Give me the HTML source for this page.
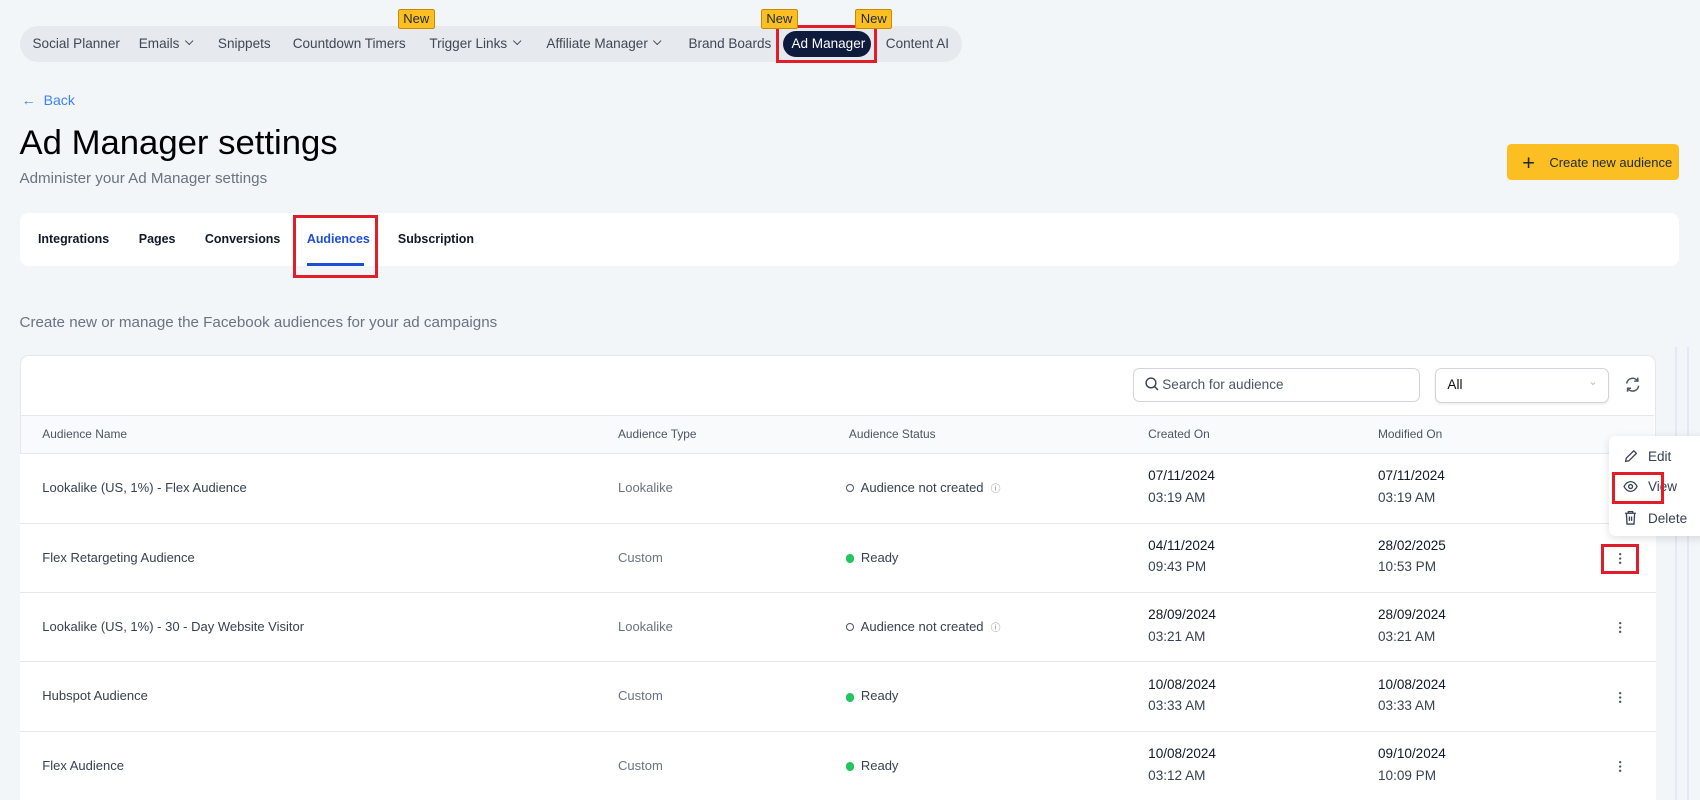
<!DOCTYPE html>
<html><head><meta charset="utf-8"><style>
html,body{margin:0;padding:0;width:1700px;height:800px;overflow:hidden;background:#f2f6f9;}
#w{zoom:1.0842;position:relative;width:1568px;height:738px;font-family:"Liberation Sans",sans-serif;color:#1f2937;}
.a{position:absolute;white-space:nowrap;}
.nav{left:18px;top:24px;width:869px;height:33px;background:#e6eaee;border-radius:17px;}
.ni{top:33px;font-size:12.5px;color:#3f4654;}
.new{background:#fbbf24;border:1px solid #c98a00;font-size:12px;color:#1f2937;padding:1px 4px;top:8px;height:15px;line-height:15px;border-radius:2px;}
.red{border:3px solid #e11d2a;box-sizing:border-box;}
.card{background:#fff;border-radius:8px;}
.tab{top:214px;font-size:11.5px;font-weight:bold;color:#111827;}
.th{top:394px;font-size:11px;color:#4b5563;}
.row{left:18px;width:1509px;height:64px;border-top:1px solid #e5e7eb;background:#fff;}
.c{font-size:12px;color:#374151;}
.d{font-size:12.5px;color:#111827;}
.t{font-size:12.5px;color:#374151;}
.dot{display:inline-block;width:8px;height:8px;border-radius:50%;background:#22c55e;margin-right:6px;vertical-align:-1px;}
.ring{display:inline-block;width:6px;height:6px;border-radius:50%;border:1.5px solid #4b5563;margin-right:6px;vertical-align:0px;}
.chev{display:inline-block;width:5px;height:5px;border-right:1.5px solid #3f4654;border-bottom:1.5px solid #3f4654;transform:rotate(45deg);margin-left:6px;vertical-align:3px;}
</style></head><body><div id="w">
<div class="a nav"></div>
<div class="a ni" style="left:30px">Social Planner</div>
<div class="a ni" style="left:128px">Emails<span class="chev"></span></div>
<div class="a ni" style="left:201px">Snippets</div>
<div class="a ni" style="left:270px">Countdown Timers</div>
<div class="a ni" style="left:396px">Trigger Links<span class="chev"></span></div>
<div class="a ni" style="left:504px">Affiliate Manager<span class="chev"></span></div>
<div class="a ni" style="left:635px">Brand Boards</div>
<div class="a" style="left:722px;top:29px;width:81px;height:24px;background:#0f1b3d;border-radius:12px;"></div>
<div class="a ni" style="left:730px;color:#fff">Ad Manager</div>
<div class="a red" style="left:716px;top:23px;width:93px;height:35px"></div>
<div class="a ni" style="left:817px">Content AI</div>
<div class="a new" style="left:367px">New</div>
<div class="a new" style="left:702px">New</div>
<div class="a new" style="left:789px">New</div>

<div class="a" style="left:20px;top:85px;font-size:13px;color:#3b82f6">←&nbsp; Back</div>
<div class="a" style="left:18px;top:114px;font-size:32px;color:#000">Ad Manager settings</div>
<div class="a" style="left:18px;top:157px;font-size:14px;color:#6b7280">Administer your Ad Manager settings</div>
<div class="a" style="left:1390px;top:133px;width:159px;height:33px;background:#fbbf24;border-radius:4px;"></div>
<div class="a" style="left:1404px;top:138px;font-size:20px;color:#222">+</div>
<div class="a" style="left:1429px;top:143px;font-size:12px;color:#1f2937">Create new audience</div>

<div class="a card" style="left:18px;top:196px;width:1531px;height:49px"></div>
<div class="a tab" style="left:35px">Integrations</div>
<div class="a tab" style="left:128px">Pages</div>
<div class="a tab" style="left:189px">Conversions</div>
<div class="a tab" style="left:283px;color:#1d4ed8">Audiences</div>
<div class="a" style="left:283px;top:243px;width:53px;height:2px;background:#1d4ed8"></div>
<div class="a tab" style="left:367px">Subscription</div>
<div class="a red" style="left:270px;top:198px;width:79px;height:58px"></div>

<div class="a" style="left:18px;top:290px;font-size:14px;color:#6b7280">Create new or manage the Facebook audiences for your ad campaigns</div>

<div class="a" style="left:1545px;top:320px;width:2px;height:418px;background:#e6e8f6"></div>
<div class="a" style="left:1556px;top:320px;width:2px;height:418px;background:#e6e8f6"></div>

<div class="a card" style="left:18px;top:327px;width:1509px;height:420px;border:1px solid #e5e7eb;box-sizing:border-box"></div>
<div class="a" style="left:1045px;top:339px;width:265px;height:32px;border:1px solid #d1d5db;border-radius:6px;box-sizing:border-box;background:#fff"></div>
<svg class="a" style="left:1056px;top:348px" width="13" height="13" viewBox="0 0 13 13"><circle cx="5.5" cy="5.5" r="4.5" fill="none" stroke="#374151" stroke-width="1.3"/><path d="M9 9l3 3" stroke="#374151" stroke-width="1.3"/></svg>
<div class="a" style="left:1072px;top:348px;font-size:12.5px;color:#4b5563">Search for audience</div>
<div class="a" style="left:1324px;top:339px;width:160px;height:33px;border:1px solid #d1d5db;border-radius:6px;box-sizing:border-box;background:#fff;box-shadow:0 1px 2px rgba(0,0,0,.08)"></div>
<div class="a" style="left:1335px;top:348px;font-size:12.5px;color:#111">All</div>
<div class="a" style="left:1465px;top:346px;font-size:10px;color:#bbb">⌄</div>
<svg class="a" style="left:1498px;top:347px" width="16" height="16" viewBox="0 0 16 16" fill="none" stroke="#4b5563" stroke-width="1.4"><path d="M2.5 7a5.5 5.5 0 0 1 10-2.5M13.5 9a5.5 5.5 0 0 1-10 2.5"/><path d="M12.7 1.5v3.2H9.5M3.3 14.5v-3.2h3.2"/></svg>

<div class="a" style="left:19px;top:383px;width:1507px;height:35px;background:#f8fafc;border-top:1px solid #e5e7eb"></div>
<div class="a th" style="left:39px">Audience Name</div>
<div class="a th" style="left:570px">Audience Type</div>
<div class="a th" style="left:783px">Audience Status</div>
<div class="a th" style="left:1059px">Created On</div>
<div class="a th" style="left:1271px">Modified On</div>

<div class="a row" style="top:418px"></div>
<div class="a row" style="top:482px"></div>
<div class="a row" style="top:546px"></div>
<div class="a row" style="top:610px"></div>
<div class="a row" style="top:674px"></div>

<div class="a c" style="left:39px;top:443px">Lookalike (US, 1%) - Flex Audience</div>
<div class="a c" style="left:570px;top:443px;color:#6b7280">Lookalike</div>
<div class="a c" style="left:780px;top:443px"><span class="ring"></span>Audience not created &nbsp;<span style="font-size:9px;color:#888">ⓘ</span></div>
<div class="a d" style="left:1059px;top:432px">07/11/2024</div><div class="a t" style="left:1059px;top:452px">03:19 AM</div>
<div class="a d" style="left:1271px;top:432px">07/11/2024</div><div class="a t" style="left:1271px;top:452px">03:19 AM</div>

<div class="a c" style="left:39px;top:507px">Flex Retargeting Audience</div>
<div class="a c" style="left:570px;top:507px;color:#6b7280">Custom</div>
<div class="a c" style="left:780px;top:507px"><span class="dot"></span>Ready</div>
<div class="a d" style="left:1059px;top:496px">04/11/2024</div><div class="a t" style="left:1059px;top:516px">09:43 PM</div>
<div class="a d" style="left:1271px;top:496px">28/02/2025</div><div class="a t" style="left:1271px;top:516px">10:53 PM</div>

<div class="a c" style="left:39px;top:571px">Lookalike (US, 1%) - 30 - Day Website Visitor</div>
<div class="a c" style="left:570px;top:571px;color:#6b7280">Lookalike</div>
<div class="a c" style="left:780px;top:571px"><span class="ring"></span>Audience not created &nbsp;<span style="font-size:9px;color:#888">ⓘ</span></div>
<div class="a d" style="left:1059px;top:560px">28/09/2024</div><div class="a t" style="left:1059px;top:580px">03:21 AM</div>
<div class="a d" style="left:1271px;top:560px">28/09/2024</div><div class="a t" style="left:1271px;top:580px">03:21 AM</div>

<div class="a c" style="left:39px;top:635px">Hubspot Audience</div>
<div class="a c" style="left:570px;top:635px;color:#6b7280">Custom</div>
<div class="a c" style="left:780px;top:635px"><span class="dot"></span>Ready</div>
<div class="a d" style="left:1059px;top:624px">10/08/2024</div><div class="a t" style="left:1059px;top:644px">03:33 AM</div>
<div class="a d" style="left:1271px;top:624px">10/08/2024</div><div class="a t" style="left:1271px;top:644px">03:33 AM</div>

<div class="a c" style="left:39px;top:699px">Flex Audience</div>
<div class="a c" style="left:570px;top:699px;color:#6b7280">Custom</div>
<div class="a c" style="left:780px;top:699px"><span class="dot"></span>Ready</div>
<div class="a d" style="left:1059px;top:688px">10/08/2024</div><div class="a t" style="left:1059px;top:708px">03:12 AM</div>
<div class="a d" style="left:1271px;top:688px">09/10/2024</div><div class="a t" style="left:1271px;top:708px">10:09 PM</div>

<svg class="a" style="left:1492px;top:509px" width="4" height="12"><circle cx="2" cy="2" r="1.1" fill="#4b5563"/><circle cx="2" cy="6" r="1.1" fill="#4b5563"/><circle cx="2" cy="10" r="1.1" fill="#4b5563"/></svg>
<svg class="a" style="left:1492px;top:573px" width="4" height="12"><circle cx="2" cy="2" r="1.1" fill="#4b5563"/><circle cx="2" cy="6" r="1.1" fill="#4b5563"/><circle cx="2" cy="10" r="1.1" fill="#4b5563"/></svg>
<svg class="a" style="left:1492px;top:637px" width="4" height="12"><circle cx="2" cy="2" r="1.1" fill="#4b5563"/><circle cx="2" cy="6" r="1.1" fill="#4b5563"/><circle cx="2" cy="10" r="1.1" fill="#4b5563"/></svg>
<svg class="a" style="left:1492px;top:701px" width="4" height="12"><circle cx="2" cy="2" r="1.1" fill="#4b5563"/><circle cx="2" cy="6" r="1.1" fill="#4b5563"/><circle cx="2" cy="10" r="1.1" fill="#4b5563"/></svg>
<div class="a red" style="left:1477px;top:502px;width:35px;height:27px"></div>

<div class="a" style="left:1484px;top:402px;width:90px;height:92px;background:#fff;border-radius:6px;box-shadow:0 2px 8px rgba(0,0,0,.12)"></div>
<svg class="a" style="left:1498px;top:414px" width="13" height="13" viewBox="0 0 13 13" fill="none" stroke="#374151" stroke-width="1.2"><path d="M1.5 11.5l.6-3L9 1.6l2.4 2.4-6.9 6.9z"/></svg>
<div class="a" style="left:1520px;top:414px;font-size:12.5px;color:#374151">Edit</div>
<svg class="a" style="left:1497px;top:443px" width="14" height="12" viewBox="0 0 14 12" fill="none" stroke="#374151" stroke-width="1.2"><path d="M1 6c1.5-3 3.5-4.5 6-4.5S11.5 3 13 6c-1.5 3-3.5 4.5-6 4.5S2.5 9 1 6z"/><circle cx="7" cy="6" r="1.8"/></svg>
<div class="a" style="left:1520px;top:442px;font-size:12.5px;color:#374151">View</div>
<svg class="a" style="left:1498px;top:470px" width="12" height="14" viewBox="0 0 12 14" fill="none" stroke="#374151" stroke-width="1.2"><path d="M1 3h10M4 3V1.5h4V3M2.2 3l.6 10h6.4l.6-10M5 6v4M7 6v4"/></svg>
<div class="a" style="left:1520px;top:471px;font-size:12.5px;color:#374151">Delete</div>
<div class="a red" style="left:1487px;top:435px;width:48px;height:30px"></div>
</div></body></html>
